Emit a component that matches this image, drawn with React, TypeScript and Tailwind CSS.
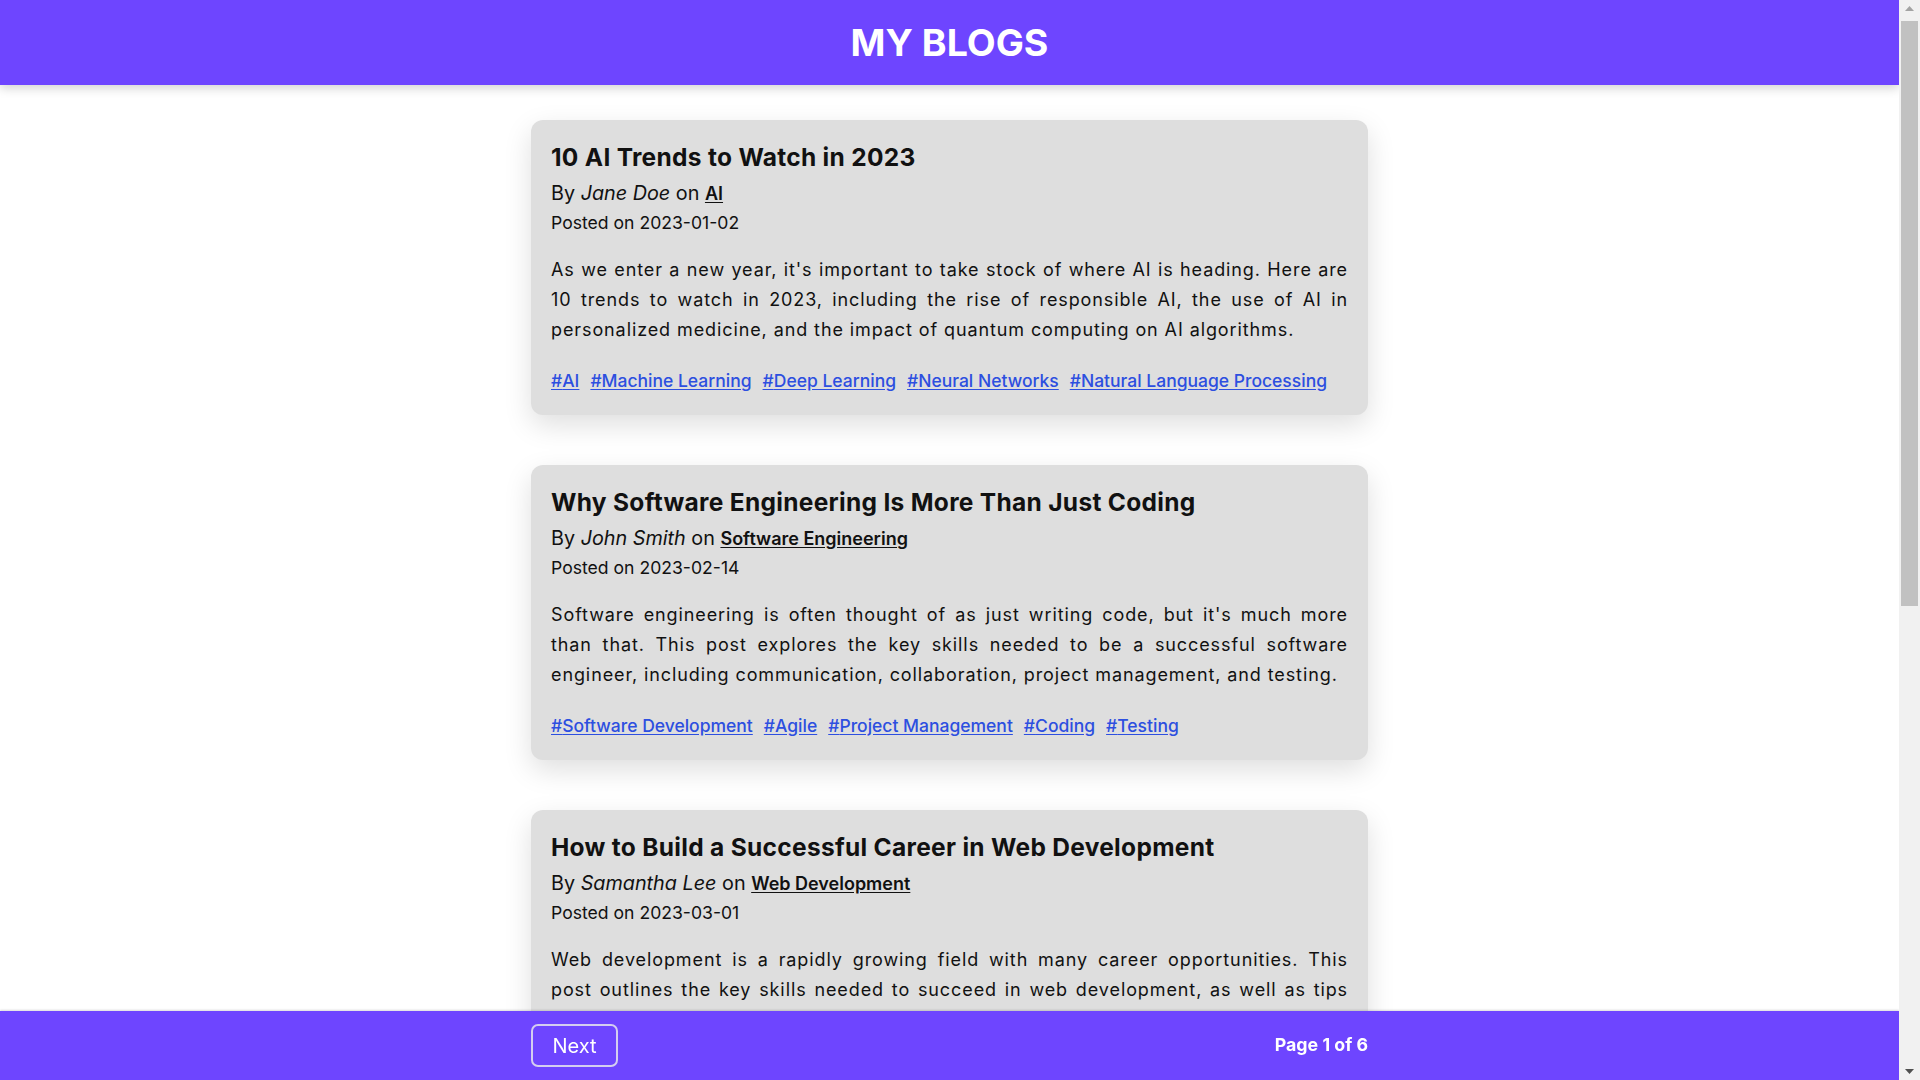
import React from 'react';

type Post = {
  title: string;
  author: string;
  category: string;
  date: string;
  body: string;
  tags: string[];
};

const posts: Post[] = [
  {
    title: '10 AI Trends to Watch in 2023',
    author: 'Jane Doe',
    category: 'AI',
    date: '2023-01-02',
    body: "As we enter a new year, it's important to take stock of where AI is heading. Here are 10 trends to watch in 2023, including the rise of responsible AI, the use of AI in personalized medicine, and the impact of quantum computing on AI algorithms.",
    tags: ['AI', 'Machine Learning', 'Deep Learning', 'Neural Networks', 'Natural Language Processing'],
  },
  {
    title: 'Why Software Engineering Is More Than Just Coding',
    author: 'John Smith',
    category: 'Software Engineering',
    date: '2023-02-14',
    body: "Software engineering is often thought of as just writing code, but it's much more than that. This post explores the key skills needed to be a successful software engineer, including communication, collaboration, project management, and testing.",
    tags: ['Software Development', 'Agile', 'Project Management', 'Coding', 'Testing'],
  },
  {
    title: 'How to Build a Successful Career in Web Development',
    author: 'Samantha Lee',
    category: 'Web Development',
    date: '2023-03-01',
    body: 'Web development is a rapidly growing field with many career opportunities. This post outlines the key skills needed to succeed in web development, as well as tips for finding your first job and building a portfolio that stands out.',
    tags: ['Web Development', 'Career', 'HTML', 'CSS', 'JavaScript'],
  },
  {
    title: 'Getting Started with Cloud Computing',
    author: 'Michael Brown',
    category: 'Cloud',
    date: '2023-03-18',
    body: 'Cloud computing has changed the way companies build and run software. This post covers the basics of the major cloud providers, the difference between IaaS, PaaS and SaaS, and how to choose the right services for your next project.',
    tags: ['Cloud', 'AWS', 'Azure', 'DevOps', 'Serverless'],
  },
  {
    title: 'The Basics of Cybersecurity for Developers',
    author: 'Emily Clark',
    category: 'Security',
    date: '2023-04-05',
    body: 'Every developer should know the fundamentals of keeping applications secure. Learn about common vulnerabilities, secure coding practices, authentication, and how to build security into your development workflow from the start.',
    tags: ['Security', 'OWASP', 'Authentication', 'Encryption', 'Best Practices'],
  },
];

function PostCard({ post }: { post: Post }) {
  return (
    <article className="w-[837px] mx-auto rounded-[12px] bg-[#dedede] px-5 pt-5 pb-[21px] shadow-[0_10px_28px_rgba(0,0,0,0.13)]">
      <h2 className="text-[24.5px] leading-[34px] font-bold tracking-[0.3px] text-[#111]">{post.title}</h2>
      <p className="mt-[5px] text-[19.8px] leading-[28px] text-[#111]">
        By <em>{post.author}</em> on{' '}
        <a href="#" className="text-[18px] font-semibold underline underline-offset-2">
          {post.category}
        </a>
      </p>
      <p className="text-[17.6px] leading-[29px] text-[#111]">Posted on {post.date}</p>
      <p className="mt-[18px] text-[18px] leading-[30px] text-justify tracking-[0.9px] text-[#111]">{post.body}</p>
      <div className="mt-[22px] flex flex-wrap gap-x-[11px] text-[17.5px] leading-[27px] font-medium text-[#2d4fe0]">
        {post.tags.map((tag) => (
          <a key={tag} href="#" className="underline underline-offset-2">
            #{tag}
          </a>
        ))}
      </div>
    </article>
  );
}

function Scrollbar() {
  return (
    <div className="fixed top-0 right-0 z-20 h-screen w-[21px] bg-[#f1f1f1] flex flex-col items-center">
      <div className="h-[17px] w-full flex items-center justify-center">
        <svg width="9" height="5" viewBox="0 0 9 5">
          <path d="M0 5 L4.5 0 L9 5 Z" fill="#a3a3a3" />
        </svg>
      </div>
      <div className="mt-[4px] h-[585px] w-[17px] bg-[#c1c1c1]" />
      <div className="flex-1" />
      <div className="h-[17px] w-full flex items-center justify-center">
        <svg width="9" height="5" viewBox="0 0 9 5">
          <path d="M0 0 L4.5 5 L9 0 Z" fill="#505050" />
        </svg>
      </div>
    </div>
  );
}

export default function App() {
  return (
    <div className="min-h-screen bg-white font-['Inter',sans-serif]">
      <div className="mr-[21px]">
        <header className="h-[85px] bg-[#6e45ff] flex items-center justify-center shadow-[0_3px_10px_rgba(0,0,0,0.18)] relative z-10">
          <h1 className="text-[37.5px] leading-none font-bold text-white">MY BLOGS</h1>
        </header>

        <main className="pt-[35px] pb-[135px] flex flex-col gap-[50px]">
          {posts.map((post) => (
            <PostCard key={post.title} post={post} />
          ))}
        </main>
      </div>

      <footer className="fixed bottom-0 left-0 right-[21px] h-[69px] bg-[#6e45ff] shadow-[0_-1px_2px_rgba(0,0,0,0.15)]">
        <div className="w-[837px] h-full mx-auto flex items-center justify-between">
          <button className="h-[43px] w-[87px] rounded-[7px] border-2 border-[#d4cdf0] text-[20px] text-white">
            Next
          </button>
          <span className="text-[17.8px] font-bold text-white">Page 1 of 6</span>
        </div>
      </footer>

      <Scrollbar />
    </div>
  );
}
